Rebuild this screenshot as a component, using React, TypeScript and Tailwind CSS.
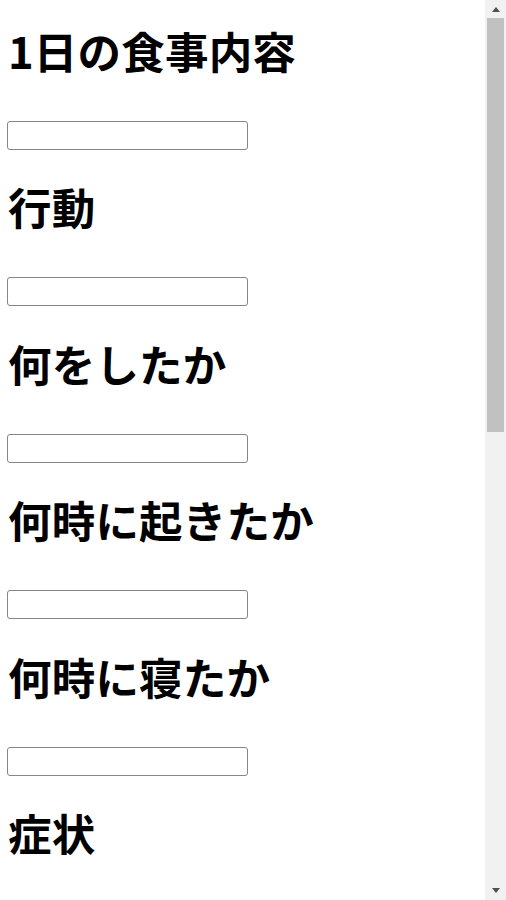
const items = ["1日の食事内容", "行動", "何をしたか", "何時に起きたか", "何時に寝たか", "症状"];

export default function App() {
  return (
    <div className="flex h-[900px] w-[506px] overflow-hidden bg-white text-black">
      <main className="flex-1 pl-[8px] pt-[22px] font-['Noto_Sans_CJK_JP','Noto_Sans',sans-serif]">
        {items.map((label, i) => (
          <section key={label} className="flex flex-col items-start">
            <h1 className="m-0 text-[43.5px] font-bold leading-[58px] tracking-[0.2px]">{label}</h1>
            {i < items.length - 1 && (
              <input
                type="text"
                className="-ml-px mt-[41px] mb-[28.4px] h-[29px] w-[241px] rounded-[3px] border border-[#858585] bg-white px-1 text-sm outline-none"
              />
            )}
          </section>
        ))}
      </main>

      <aside className="flex w-[21px] flex-col items-center bg-[#f1f1f1]">
        <div className="flex h-[18px] w-full items-center justify-center">
          <svg width="8" height="5" viewBox="0 0 8 5">
            <polygon points="0,5 8,5 4,0" fill="#505050" />
          </svg>
        </div>
        <div className="h-[414px] w-[17px] bg-[#c1c1c1]" />
        <div className="flex-1" />
        <div className="flex h-[20px] w-full items-center justify-center">
          <svg width="8" height="5" viewBox="0 0 8 5">
            <polygon points="0,0 8,0 4,5" fill="#505050" />
          </svg>
        </div>
      </aside>
    </div>
  );
}
